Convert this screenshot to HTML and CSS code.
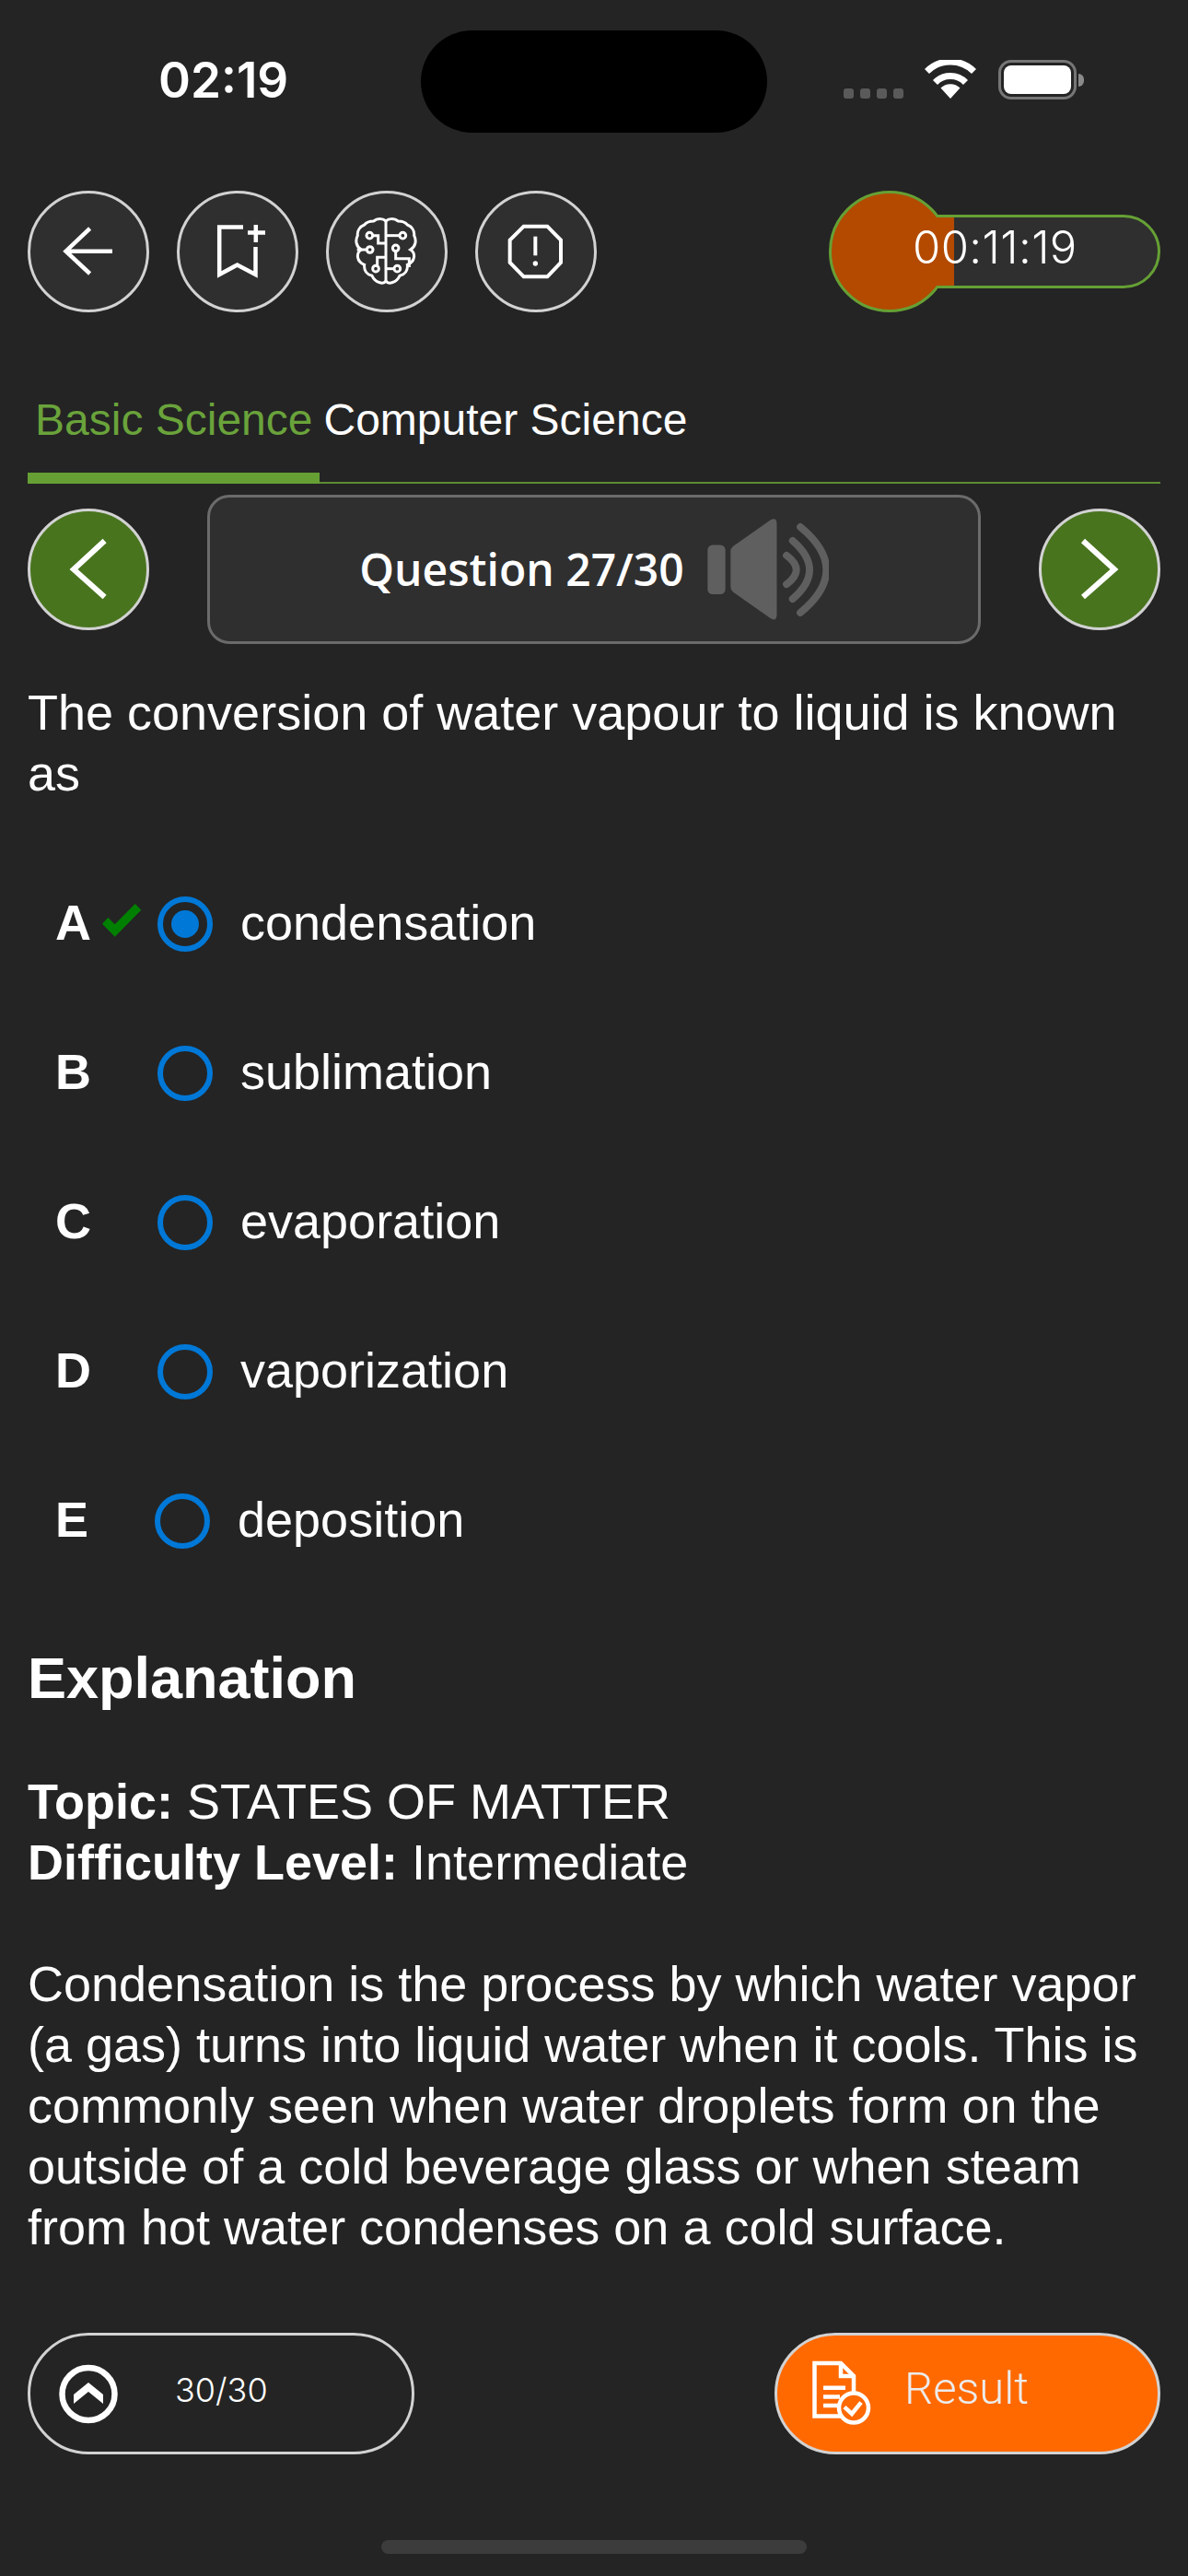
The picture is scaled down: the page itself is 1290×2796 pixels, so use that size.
FILE: index.html
```html
<!DOCTYPE html>
<html lang="en">
<head>
<meta charset="utf-8">
<title>Question 27/30</title>
<link rel="stylesheet" href="styles.css">
</head>
<body>
<div class="app">
  <header class="status">
    <div class="status-time">02:19</div>
    <div class="island"></div>
    <div class="status-right">
      <div class="signal"><span></span><span></span><span></span><span></span></div>
      <svg class="wifi" width="58" height="42" viewBox="0 0 58 42"><path d="M29 42 L18.5 30.5 A15 15 0 0 1 39.5 30.5 Z" fill="#fff"/><path d="M12.5 24.5 A23 23 0 0 1 45.5 24.5" fill="none" stroke="#fff" stroke-width="7"/><path d="M3.5 12.5 A36 36 0 0 1 54.5 12.5" fill="none" stroke="#fff" stroke-width="7"/></svg>
      <div class="battery"><div class="battery-body"><div class="battery-level"></div></div><div class="battery-cap"></div></div>
    </div>
  </header>

  <div class="toolbar">
    <button class="round">
      <svg class="round-icon" viewBox="3 3 126 126"><path d="M67.6 41 L41.5 65.7 L67.6 90 M41.5 65.7 H92" fill="none" stroke="#fff" stroke-width="4.5"/></svg>
    </button>
    <button class="round">
      <svg class="round-icon" viewBox="3 3 126 126"><path d="M72 39.5 H46.2 V91 L65.6 80.5 L85.5 91 V61 M85.8 37 V56 M77 45.5 H96" fill="none" stroke="#fff" stroke-width="4.5"/></svg>
    </button>
    <button class="round">
      <svg class="round-icon" viewBox="54 60 378 378"><g fill="none" stroke="#fff" stroke-width="9"><path d="M240 150 C232 141 212 140 200 150 C190 150 178 152 170 162 C155 168 146 182 148 197 C140 212 142 232 160 243 C142 254 144 282 170 292 C168 310 178 324 195 328 C205 350 232 358 240 345"/><path d="M240 150 C248 141 268 140 280 150 C290 150 302 152 310 162 C325 168 334 182 332 197 C340 212 338 232 320 243 C338 254 336 282 310 292 C312 310 302 324 285 328 C275 350 248 358 240 345"/><path d="M240 150 V345"/><circle cx="187" cy="197" r="10"/><path d="M197 197 H215 V222 H240"/><circle cx="188" cy="243" r="10"/><path d="M178 243 H146"/><circle cx="207" cy="305" r="10"/><path d="M212 296 V268 H240"/><circle cx="295" cy="197" r="10"/><path d="M285 197 H240"/><circle cx="272" cy="238" r="10"/><path d="M272 248 V272 H316 V300"/><circle cx="277" cy="305" r="10"/><path d="M267 305 H240"/></g></svg>
    </button>
    <button class="round">
      <svg class="round-icon" viewBox="539 60 378 378"><path d="M688 167 H765 L809 212 V285 L765 331 H688 L643 285 V212 Z" fill="none" stroke="#fff" stroke-width="12"/><path d="M726 200 V262" stroke="#fff" stroke-width="12"/><circle cx="726" cy="288" r="8" fill="#fff"/></svg>
    </button>
    <div class="timer">
      <div class="timer-knob"></div>
      <div class="timer-pill">
        <div class="timer-fill"></div>
        <span class="timer-text">00:11:19</span>
      </div>
    </div>
  </div>

  <nav class="tabs">
    <div class="tab tab-active">Basic Science</div>
    <div class="tab">Computer Science</div>
  </nav>

  <div class="qnav">
    <button class="round round-green">
      <svg class="round-icon" viewBox="3 3 126 126"><path d="M83.6 35 L50 66 L83.6 96" fill="none" stroke="#fff" stroke-width="6"/></svg>
    </button>
    <div class="qbox">
      <span class="qbox-label">Question 27/30</span>
      <svg class="speaker" width="132" height="113" viewBox="82 38 395 340"><g fill="#5f5f5f"><rect x="82" y="124" width="58" height="161" rx="16"/><path d="M165 128 L288 42 Q308 32 308 55 V350 Q308 375 288 364 L165 277 Q157 270 157 260 V145 Q157 135 165 128 Z"/></g><g fill="none" stroke="#5f5f5f" stroke-width="24" stroke-linecap="round"><path d="M340 158 Q404 205 340 252"/><path d="M360 110 Q470 205 360 300"/><path d="M385 65 Q555 205 385 345"/></g></svg>
    </div>
    <button class="round round-green">
      <svg class="round-icon" viewBox="3 3 126 126"><path d="M48 35 L82 66 L48 96" fill="none" stroke="#fff" stroke-width="6"/></svg>
    </button>
  </div>

  <p class="question">The conversion of water vapour to liquid is known as</p>

  <ul class="options">
    <li class="option">
      <span class="opt-letter">A</span>
      <span class="opt-mark"><svg class="opt-check" width="43" height="36" viewBox="0 0 43 36"><polygon points="0,21.7 6.3,15 13.7,22.3 35.7,0 42.3,6.7 13.7,35.7" fill="#008000"/></svg></span>
      <span class="radio radio-on"></span>
      <span class="opt-text">condensation</span>
    </li>
    <li class="option">
      <span class="opt-letter">B</span>
      <span class="opt-mark"></span>
      <span class="radio"></span>
      <span class="opt-text">sublimation</span>
    </li>
    <li class="option">
      <span class="opt-letter">C</span>
      <span class="opt-mark"></span>
      <span class="radio"></span>
      <span class="opt-text">evaporation</span>
    </li>
    <li class="option">
      <span class="opt-letter">D</span>
      <span class="opt-mark"></span>
      <span class="radio"></span>
      <span class="opt-text">vaporization</span>
    </li>
    <li class="option">
      <span class="opt-letter">E</span>
      <span class="opt-mark opt-mark-short"></span>
      <span class="radio"></span>
      <span class="opt-text">deposition</span>
    </li>
  </ul>

  <h2 class="expl-title">Explanation</h2>
  <p class="meta"><b>Topic:</b> STATES OF MATTER<br><b>Difficulty Level:</b> Intermediate</p>
  <p class="expl-body">Condensation is the process by which water vapor (a gas) turns into liquid water when it cools. This is commonly seen when water droplets form on the outside of a cold beverage glass or when steam from hot water condenses on a cold surface.</p>

  <footer class="bottom">
    <div class="pill pill-count">
      <svg class="up-icon" width="64" height="65" viewBox="0 0 64 65"><circle cx="32" cy="32.5" r="28.5" fill="none" stroke="#fff" stroke-width="6.5"/><polygon points="16,33 32,20 48,33 48,43 32,30 16,43" fill="#fff"/></svg>
      <span class="count-text">30/30</span>
    </div>
    <div class="pill pill-result">
      <svg class="result-icon" width="68" height="74" viewBox="0 0 68 74"><g fill="none" stroke="#fff" stroke-width="4.5"><path d="M47 40 V18 L33 4 H4.5 V61.5 H42"/><path d="M33 4 V18 H47"/><path d="M14 30.7 H38 M14 40.5 H32 M14 50 H30"/><circle cx="47" cy="52.5" r="16" fill="#ff6900"/><path d="M37 51.7 L45 59 L55 46.7"/></g></svg>
      <span class="result-text">Result</span>
    </div>
  </footer>

  <div class="home-bar"></div>
</div>
</body>
</html>
```
FILE: styles.css
```css
* { box-sizing: border-box; }
html, body { margin: 0; padding: 0; }
body {
  width: 1290px;
  height: 2796px;
  background: #242424;
  color: #fff;
  font-family: "Liberation Sans", Arial, sans-serif;
  overflow: hidden;
}
.app { padding: 0 30px; height: 2796px; }

/* status bar */
.status {
  display: grid;
  grid-template-columns: 427px 376px 1fr;
  height: 207px;
  padding-top: 33px;
  margin: 0 -30px 0 0;
}
.status-time {
  padding-left: 142px;
  font-family: Inter, sans-serif;
  font-weight: 600;
  font-size: 53px;
  line-height: 64px;
  padding-top: 22px;
  white-space: nowrap;
}
.island { height: 111px; background: #000; border-radius: 56px; }
.status-right { display: flex; align-items: flex-start; padding: 32px 0 0 83px; }
.signal { display: flex; gap: 7px; margin: 31px 22px 0 0; }
.signal span { width: 11px; height: 11px; border-radius: 3px; background: #5a5a5a; }
.wifi { flex: none; margin-right: 23px; }
.battery { display: flex; align-items: center; }
.battery-body {
  width: 85px;
  height: 43px;
  border: 3.5px solid #767676;
  border-radius: 14px;
  padding: 3px;
}
.battery-level { height: 100%; background: #fff; border-radius: 8px; }
.battery-cap { width: 6px; height: 14px; margin-left: 2px; background: #8a8a8a; border-radius: 0 6px 6px 0; }

/* round buttons */
.round {
  flex: none;
  width: 132px;
  height: 132px;
  padding: 0;
  border: 3px solid #d2d2d2;
  border-radius: 50%;
  background: #2f2f2f;
  display: flex;
  align-items: center;
  justify-content: center;
}
.round-green { background: #48741e; }
.round-icon { width: 126px; height: 126px; display: block; }

/* toolbar */
.toolbar { display: flex; gap: 30px; height: 132px; }
.timer {
  position: relative;
  width: 360px;
  height: 132px;
  margin-left: auto;
  display: flex;
  align-items: center;
  justify-content: flex-end;
}
.timer-knob {
  position: absolute;
  left: 0;
  top: 0;
  z-index: 1;
  width: 132px;
  height: 132px;
  border: 3px solid #66a035;
  border-radius: 50%;
  background: #b34a00;
}
.timer-pill {
  position: relative;
  width: 300px;
  height: 80px;
  border: 3px solid #66a035;
  border-radius: 40px;
  background: #2f2f2f;
  display: flex;
  align-items: center;
  padding-left: 28px;
}
.timer-fill {
  position: absolute;
  left: 0;
  top: 0;
  bottom: 0;
  z-index: 2;
  width: 73px;
  background: #b34a00;
}
.timer-text {
  position: relative;
  z-index: 3;
  font-family: Inter, sans-serif;
  font-weight: 300;
  font-size: 49px;
  letter-spacing: 0.4px;
  line-height: 56px;
  margin-bottom: 9px;
}

/* tabs */
.tabs {
  display: flex;
  height: 186px;
  align-items: flex-end;
  border-bottom: 2px solid #5c8f31;
}
.tab {
  font-size: 48px;
  line-height: 56px;
  padding: 0 8px 39px 4px;
  white-space: nowrap;
}
.tab-active {
  color: #6aa33b;
  border-bottom: 12px solid #66a035;
  margin-bottom: -2px;
  padding: 0 8px 29px;
}

/* question navigator */
.qnav {
  display: flex;
  align-items: center;
  justify-content: space-between;
  margin-top: 12px;
  height: 162px;
}
.qbox {
  width: 840px;
  height: 162px;
  border: 3px solid #6b6b6b;
  border-radius: 24px;
  background: #2f2f2f;
  display: flex;
  align-items: center;
  justify-content: center;
  gap: 25px;
}
.qbox-label {
  font-family: "Open Sans", sans-serif;
  font-weight: 600;
  font-size: 48px;
  line-height: 64px;
}
.speaker { flex: none; margin-top: 2px; }

/* question */
.question {
  margin: 41px 0 0;
  font-size: 54px;
  line-height: 66px;
}

/* options */
.options { list-style: none; margin: 50px 0 0; padding: 0; }
.option { display: flex; align-items: center; height: 162px; padding-left: 30px; font-size: 54px; }
.opt-letter { width: 51px; font-weight: 700; font-size: 54px; margin-bottom: 4px; }
.opt-text { margin-bottom: 4px; }
.opt-mark { width: 60px; display: flex; align-items: center; }
.opt-mark-short { width: 57px; }
.opt-check { display: block; margin-bottom: 8px; }
.radio {
  flex: none;
  width: 60px;
  height: 60px;
  border: 6px solid #0078d7;
  border-radius: 50%;
  display: flex;
  align-items: center;
  justify-content: center;
  margin-right: 30px;
}
.radio-on::before {
  content: "";
  width: 30px;
  height: 30px;
  border-radius: 50%;
  background: #0078d7;
}

/* explanation */
.expl-title { margin: 52px 0 0; font-size: 63px; line-height: 74px; font-weight: 700; }
.meta { margin: 64px 0 0; font-size: 54px; line-height: 66px; }
.expl-body { margin: 66px 0 0; font-size: 54px; line-height: 66px; }

/* bottom */
.bottom { display: flex; justify-content: space-between; margin-top: 82px; height: 132px; }
.pill {
  height: 132px;
  border: 3px solid #d2d2d2;
  border-radius: 66px;
  display: flex;
  align-items: center;
}
.pill-count { width: 420px; padding-left: 31px; gap: 62px; }
.pill-result { width: 419px; padding-left: 36px; gap: 34px; background: #ff6900; }
.up-icon, .result-icon { flex: none; display: block; }
.count-text {
  font-family: Inter, sans-serif;
  font-weight: 300;
  font-size: 36px;
  line-height: 44px;
  margin-bottom: 9px;
}
.result-text {
  font-family: Roboto, sans-serif;
  font-weight: 300;
  font-size: 49px;
  line-height: 56px;
  color: #ececec;
  margin-bottom: 10px;
}
.home-bar {
  width: 462px;
  height: 15px;
  margin: 93px auto 0;
  background: #3c3c3c;
  border-radius: 8px;
}
```
